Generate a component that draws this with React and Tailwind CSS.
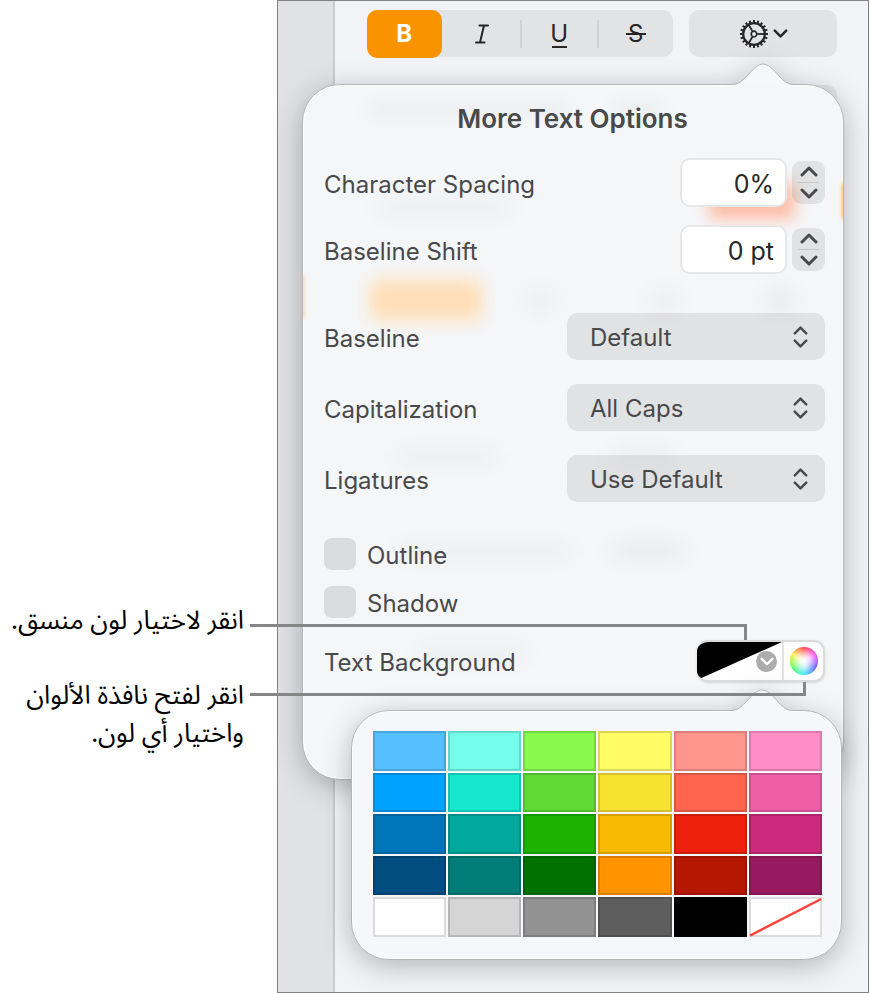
import React, { useState } from 'react';
import clsx from 'clsx';

const SWATCHES = [
  ['Light blue', 'bg-[#56bfff]'],
  ['Light teal', 'bg-[#73fdea]'],
  ['Light green', 'bg-[#88fa4e]'],
  ['Light yellow', 'bg-[#fffc66]'],
  ['Light red', 'bg-[#ff968d]'],
  ['Light pink', 'bg-[#ff8dc6]'],
  ['Blue', 'bg-[#00a2ff]'],
  ['Teal', 'bg-[#16e7cf]'],
  ['Green', 'bg-[#60d937]'],
  ['Yellow', 'bg-[#f8e231]'],
  ['Red', 'bg-[#ff644e]'],
  ['Pink', 'bg-[#ef5fa7]'],
  ['Medium blue', 'bg-[#0076ba]'],
  ['Medium teal', 'bg-[#00a89d]'],
  ['Medium green', 'bg-[#1db100]'],
  ['Medium yellow', 'bg-[#f8ba00]'],
  ['Medium red', 'bg-[#ee220c]'],
  ['Medium pink', 'bg-[#cb297b]'],
  ['Dark blue', 'bg-[#004d80]'],
  ['Dark teal', 'bg-[#017c76]'],
  ['Dark green', 'bg-[#017100]'],
  ['Orange', 'bg-[#ff9300]'],
  ['Dark red', 'bg-[#b51700]'],
  ['Dark pink', 'bg-[#971a5e]'],
  ['White', 'bg-white'],
  ['Light gray', 'bg-[#d5d5d5]'],
  ['Gray', 'bg-[#929292]'],
  ['Dark gray', 'bg-[#5e5e5e]'],
  ['Black', 'bg-black'],
];

const Chevron = ({ up, className }) => (
  <svg viewBox="0 0 18 11" fill="none" stroke="currentColor" strokeWidth="3" strokeLinecap="round" strokeLinejoin="round" className={className}>
    <path d={up ? 'M2 9 L9 2 L16 9' : 'M2 2 L9 9 L16 2'} />
  </svg>
);

const GearIcon = () => (
  <svg viewBox="-15 -15 30 30" fill="none" stroke="currentColor" className="size-[30px]">
    <circle r="10.8" strokeWidth="2.2" />
    {Array.from({ length: 20 }, (_, i) => (
      <path key={i} d="M11.5 0 H14" strokeWidth="2" transform={`rotate(${i * 18})`} />
    ))}
    <circle r="2.8" strokeWidth="1.7" />
    {[0, 120, 240].map((angle) => (
      <path key={angle} d="M3.4 0 H10.5" strokeWidth="1.8" transform={`rotate(${angle})`} />
    ))}
  </svg>
);

const ItalicIcon = () => (
  <svg viewBox="0 0 14 20" fill="none" stroke="currentColor" strokeWidth="2" strokeLinecap="round" className="h-5 w-3.5">
    <path d="M4.5 1.5 H13 M1 18.5 H9.5 M9 1.5 L5 18.5" />
  </svg>
);

// Rounded panel and its arrow share one shadow
const PopoverShape = ({ tailClass, fill, children }) => (
  <div className="absolute inset-0 drop-shadow-[0_6px_14px_rgba(0,0,0,0.26)]" aria-hidden="true">
    <div className={clsx('absolute inset-0 overflow-hidden rounded-[38px] border border-[#b4b5b7] shadow-[inset_0_0_0_1px_#ffffff]', fill)}>
      {children}
    </div>
    <svg viewBox="0 0 62 23" className={clsx('absolute -top-[21px] h-[23px] w-[62px]', tailClass)}>
      <path
        d="M1 21.5 C7 21 10 18 14 14 C22 5 26 1 31 1 C36 1 40 5 48 14 C52 18 55 21 61 21.5 V23 H1 Z"
        fill="#f6f7f8"
      />
      <path
        d="M1 21.5 C7 21 10 18 14 14 C22 5 26 1 31 1 C36 1 40 5 48 14 C52 18 55 21 61 21.5"
        fill="none"
        stroke="#b4b5b7"
      />
    </svg>
  </div>
);

const StepperRow = ({ id, label, unit, className }) => {
  const [value, setValue] = useState(0);

  return (
    <div className={clsx('flex h-[49px] items-center', className)}>
      <label htmlFor={id} className="flex-1 pt-1">{label}</label>
      <input
        id={id}
        value={`${value}${unit}`}
        readOnly
        className="h-[49px] w-[107px] rounded-[10px] border-2 border-[#e6e7e8] bg-white pr-[11px] pt-0.5 text-right text-[25px] text-[#262626]"
      />
      <div className="ml-[5px] flex h-[43px] w-[33px] flex-col items-center rounded-[9px] bg-black/8">
        <button type="button" aria-label={`Increase ${label}`} onClick={() => setValue(value + 1)} className="flex w-full flex-1 items-center justify-center">
          <Chevron up className="h-[11px] w-[18px]" />
        </button>
        <span className="h-px w-[21px] bg-[#c6c7c8]" />
        <button type="button" aria-label={`Decrease ${label}`} onClick={() => setValue(value - 1)} className="flex w-full flex-1 items-center justify-center">
          <Chevron className="h-[11px] w-[18px]" />
        </button>
      </div>
    </div>
  );
};

const SelectRow = ({ id, label, options }) => (
  <div className="flex h-[47px] items-center">
    <label htmlFor={id} className="flex-1 pt-1">{label}</label>
    <div className="relative">
      <select id={id} className="block h-[47px] w-[258px] appearance-none rounded-[10px] bg-black/8 px-[23px] pt-0.5">
        {options.map((option) => (
          <option key={option}>{option}</option>
        ))}
      </select>
      <div className="pointer-events-none absolute inset-y-0 right-[17px] flex flex-col items-center justify-center gap-1">
        <Chevron up className="h-[9px] w-[15px]" />
        <Chevron className="h-[9px] w-[15px]" />
      </div>
    </div>
  </div>
);

const CheckRow = ({ id, label }) => (
  <div className="flex h-8 items-center gap-[11px]">
    <input id={id} type="checkbox" className="size-8 appearance-none rounded-[8px] bg-[#dbdcde] checked:bg-[#fa9300]" />
    <label htmlFor={id} className="pt-1">{label}</label>
  </div>
);

const ColorPalette = () => (
  <div className="absolute -right-[17px] top-[70px] w-[491px] pb-[23px] pl-[22px] pr-5 pt-[21px]">
    <PopoverShape tailClass="right-[49px]" fill="bg-[#f6f7fa]" />
    <div className="relative grid h-[206px] grid-cols-6 grid-rows-5 gap-0.5">
      {SWATCHES.map(([name, color]) => (
        <button key={name} type="button" aria-label={name} className={clsx('border-2 border-black/14', color)} />
      ))}
      <button type="button" aria-label="No fill" className="border-2 border-[#dcdcde] bg-white">
        <svg viewBox="0 0 70 36" preserveAspectRatio="none" className="size-full overflow-visible">
          <path d="M-1 37 L71 0" stroke="#ff4238" strokeWidth="2.5" />
        </svg>
      </button>
    </div>
  </div>
);

const TextBackgroundRow = () => (
  <div className="relative mt-[22px] flex h-[42px] items-center">
    <span className="flex-1 pt-1">Text Background</span>
    <div className="flex h-[42px] w-[128px] overflow-hidden rounded-[11px] border-2 border-l-0 border-[#dadbdc] bg-white shadow-sm">
      <button type="button" aria-label="Choose a preset color" className="relative flex-1">
        <svg viewBox="0 0 84 38" preserveAspectRatio="none" className="size-full">
          <path d="M0 0 H84 L0 38 Z" fill="#000000" />
        </svg>
        <span className="absolute right-[5px] top-[9px] flex size-[21px] items-center justify-center rounded-full bg-[#acacac] text-white">
          <Chevron className="h-[9px] w-3.5" />
        </span>
      </button>
      <button type="button" aria-label="Open the color window" className="flex w-[41px] items-center justify-center border-l-2 border-[#e2e2e4]">
        <span className="size-7 rounded-full bg-[radial-gradient(circle,#ffffff_5%,rgba(255,255,255,0.75)_30%,transparent_72%),conic-gradient(#ff3b3b,#ff4bff,#5a5aff,#3be8ff,#4dff4d,#fff03b,#ff3b3b)]" />
      </button>
    </div>
    <ColorPalette />
  </div>
);

// Soft traces of the inspector showing through the translucent popover
const Backdrop = () => (
  <>
    <div className="absolute left-[67px] top-[194px] h-[42px] w-[112px] rounded-lg bg-[#ffdfb8] blur-[8px]" />
    <div className="absolute left-[406px] top-[98px] h-[36px] w-[86px] rounded-lg bg-[#ffbca4] blur-[8px]" />
    <div className="absolute -right-2 top-[98px] h-[36px] w-2 bg-[#ff9300] blur-[2px]" />
    <div className="absolute -left-2 top-[190px] h-[44px] w-2 bg-[#ff9300]/60 blur-[2px]" />
    <div className="absolute left-[66px] top-[16px] h-4 w-[200px] bg-black/3 blur-[8px]" />
    <div className="absolute left-[310px] top-[16px] h-4 w-[50px] bg-black/3 blur-[8px]" />
    <div className="absolute left-[76px] top-[114px] h-4 w-[130px] bg-black/3 blur-[10px]" />
    <div className="absolute left-[225px] top-[204px] size-6 bg-black/3 blur-[10px]" />
    <div className="absolute left-[350px] top-[204px] size-6 bg-black/3 blur-[10px]" />
    <div className="absolute left-[465px] top-[204px] size-6 bg-black/5 blur-[10px]" />
    <div className="absolute left-[96px] top-[364px] h-4 w-[96px] bg-black/3 blur-[10px]" />
    <div className="absolute left-[310px] top-[362px] h-5 w-[60px] bg-black/3 blur-[10px]" />
    <div className="absolute left-[96px] top-[458px] h-4 w-[170px] bg-black/3 blur-[10px]" />
    <div className="absolute left-[310px] top-[458px] h-4 w-[70px] bg-black/5 blur-[10px]" />
    <div className="absolute left-[116px] top-[560px] h-4 w-[106px] bg-black/3 blur-[10px]" />
  </>
);

const TextOptionsPopover = () => (
  <div className="absolute -left-[33px] right-6 top-[83px] pb-[98px] pl-[22px] pr-[19px] pt-[18px]">
    <PopoverShape tailClass="right-[50px]" fill="bg-[#f5f6f8]">
      <Backdrop />
    </PopoverShape>
    <div className="relative">
      <h2 className="mb-6 pr-1 pt-0.5 text-center text-[26px] font-semibold leading-[30px]">More Text Options</h2>
      <StepperRow id="spacing" label="Character Spacing" unit="%" />
      <StepperRow id="shift" label="Baseline Shift" unit=" pt" className="mt-[18px]" />
      <div className="mt-[39px] flex flex-col gap-6">
        <SelectRow id="baseline" label="Baseline" options={['Default', 'Superscript', 'Subscript']} />
        <SelectRow id="caps" label="Capitalization" options={['All Caps', 'Small Caps', 'None']} />
        <SelectRow id="ligatures" label="Ligatures" options={['Use Default', 'Use None', 'Use All']} />
      </div>
      <div className="mt-9 flex flex-col gap-4">
        <CheckRow id="outline" label="Outline" />
        <CheckRow id="shadow" label="Shadow" />
      </div>
      <TextBackgroundRow />
    </div>
  </div>
);

const Toolbar = () => (
  <div className="flex h-[47px] gap-4 text-[#262626]">
    <div className="grid flex-1 grid-cols-4 rounded-[10px] bg-[#e2e3e5]">
      <button type="button" className="mr-0.5 rounded-[10px] bg-[#fa9300] text-[24px] font-bold text-white">B</button>
      <button type="button" aria-label="Italic" className="flex items-center justify-center">
        <ItalicIcon />
      </button>
      <button type="button" className="relative my-2.5 border-l-2 border-[#cfd0d2] text-[24px] leading-6">
        U
        <span className="absolute inset-x-0 bottom-0 mx-auto h-0.5 w-[15px] bg-[#262626]" />
      </button>
      <button type="button" className="relative my-2.5 border-l-2 border-[#cfd0d2] text-[24px] leading-7">
        S
        <span className="absolute inset-0 m-auto h-0.5 w-5 bg-[#262626]" />
      </button>
    </div>
    <button type="button" aria-label="More text options" className="flex w-[148px] items-center justify-center gap-1 rounded-[10px] bg-[#e2e3e5]">
      <GearIcon />
      <Chevron className="h-[9px] w-[15px]" />
    </button>
  </div>
);

const App = () => (
  <main className="relative flex min-h-screen bg-white pr-px font-[Inter,sans-serif] text-[24px] text-[#48494a]">
    <aside dir="rtl" lang="ar" className="w-[277px] pr-[33px] pt-[602px] font-['Noto_Sans_Arabic','Noto_Sans','DejaVu_Sans',sans-serif] text-[26px] leading-[38px] text-black">
      <p className="whitespace-nowrap">انقر لاختيار لون منسق.</p>
      <p className="mt-[37px] whitespace-nowrap">
        انقر لفتح نافذة الألوان
        <br />
        واختيار أي لون.
      </p>
    </aside>

    <section className="flex flex-1 border border-[#828286]">
      <div className="w-[57px] border-r-2 border-[#cbccd0] bg-[#e1e2e6]" />
      <div className="relative flex-1 bg-[#f2f3f7] pl-8 pr-[31px] pt-[9px]">
        <Toolbar />
        <div className="mt-7 flex h-[47px] rounded-[10px] bg-[#e2e3e5]" />
        <TextOptionsPopover />
      </div>
    </section>

    {/* leader lines from the captions to the color well */}
    <div className="absolute left-[250px] right-[123px] top-[624px] h-4 border-r-[3px] border-t-[3px] border-[#868686]" />
    <div className="absolute left-[250px] right-16 top-[682px] h-3.5 border-b-[3px] border-r-[3px] border-[#868686]" />
  </main>
);

export default App;
